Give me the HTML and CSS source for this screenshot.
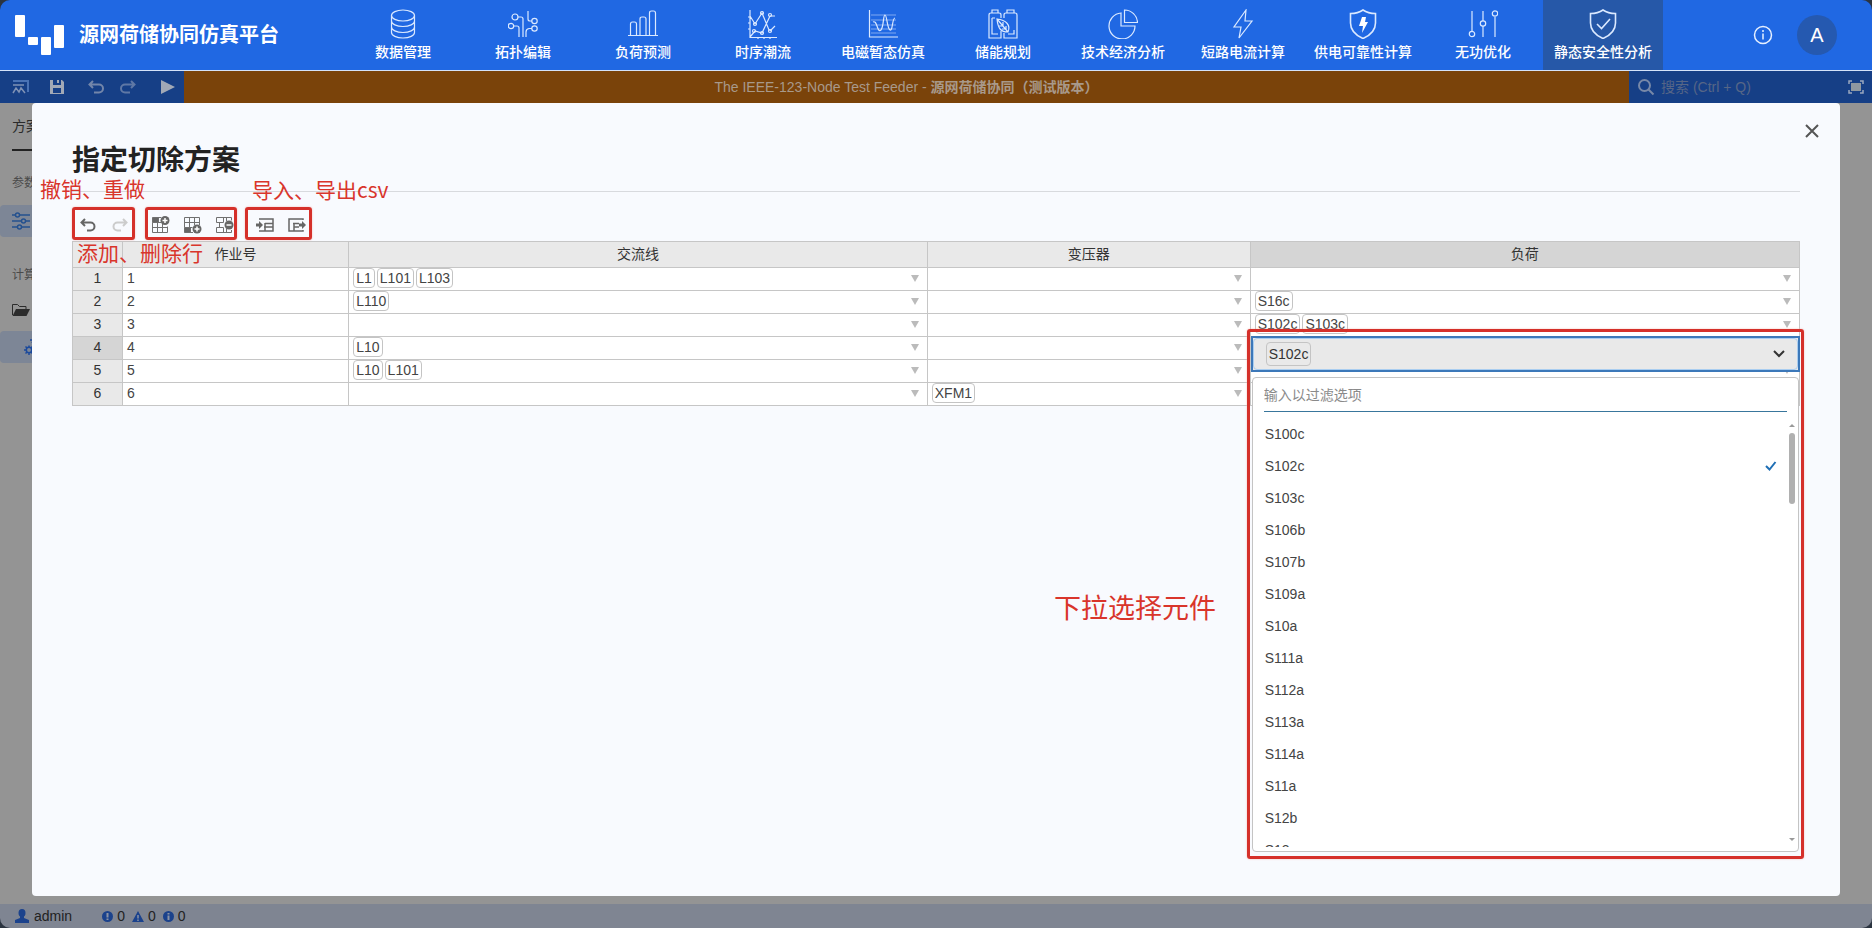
FILE: index.html
```html
<!DOCTYPE html>
<html lang="zh-CN">
<head>
<meta charset="utf-8">
<title>源网荷储协同仿真平台</title>
<link rel="stylesheet" href="styles.css">
</head>
<body>
<div class="app">
  <header class="header">
    <div class="brand">
      <svg class="logo" width="50" height="42" viewBox="0 0 50 42" fill="#fff"><rect x="0" y="1" width="10" height="22" rx="1"/><rect x="13" y="23" width="10" height="8" rx="1"/><rect x="26" y="23" width="10" height="18" rx="1"/><rect x="39" y="11" width="10" height="23" rx="1"/></svg>
      <span class="brand-name">源网荷储协同仿真平台</span>
    </div>
    <nav class="nav">
      <button class="nav-item"><svg class="nav-icon" viewBox="0 0 30 30"><ellipse cx="15" cy="6.500" rx="11.500" ry="5.500"/><path d="M3.500 6.500v17c0 3 5 5.500 11.500 5.500s11.500-2.500 11.500-5.500v-17M3.500 12c0 3 5 5.500 11.500 5.500S26.500 15 26.500 12M3.500 18c0 3 5 5.500 11.500 5.500S26.500 21 26.500 18"/></svg>数据管理</button>
      <button class="nav-item"><svg class="nav-icon" viewBox="0 0 30 30"><circle cx="7" cy="8" r="3"/><circle cx="3" cy="17" r="2.700"/><circle cx="26.500" cy="12" r="2.700"/><circle cx="26.500" cy="19.500" r="2.700"/><path d="M10 8h3q2 0 2 2v18M6 17h3q2 0 2 2v9M20 2v8q0 2 2 2h2M18 28v-5q0-3 3-3.500h3"/></svg>拓扑编辑</button>
      <button class="nav-item"><svg class="nav-icon" viewBox="0 0 30 30"><path d="M0 26.500h30M2.500 26.500V15q0-2 2-2h2q2 0 2 2v11.500M12 26.500V10q0-2 2-2h2q2 0 2 2v16.500M21.500 26.500V4q0-2 2-2h2q2 0 2 2v22.500"/></svg>负荷预测</button>
      <button class="nav-item"><svg class="nav-icon" viewBox="0 0 30 30"><path d="M2 1v27.500h27M2 7l5 8 7-11 7 17h1M2 28l5-6 7 2 8-17h5M22 22l5-5M10 28v2M16 28v2M22 28v2M0 8h2M0 14h2M0 20h2"/><circle cx="7" cy="15" r="1.500"/><circle cx="14" cy="4" r="1.500"/><circle cx="22" cy="6" r="1.500"/><circle cx="6" cy="22" r="1.500"/><circle cx="14" cy="24" r="1.500"/><circle cx="22" cy="22" r="1.500"/></svg>时序潮流</button>
      <button class="nav-item"><svg class="nav-icon" viewBox="0 0 30 30"><path d="M1.500 1v27H30"/><path d="M5 13c2-1 3 1 4 4s2 6 4 4c3-4 2-15 4-15s2 13 5 15c3 1 2-12 5-12" /><path opacity=".5" d="M3 6h25M3 11h25M3 16h25M3 20h25M3 24h25"/></svg>电磁暂态仿真</button>
      <button class="nav-item"><svg class="nav-icon" viewBox="0 0 30 30"><path d="M13 9V6q0-2-2-2H3Q1 4 1 6v23h12v-7M4 4V1h6v3M16 9V6q0-2 2-2h9q2 0 2 2v23H16v-5M19 4V1h7v3"/><path d="M9 10c1 10 4 13 11 13 3-7-2-12-11-13zl11 13M15 13v4h-4M18 17v3h-4M4 9h3M4 9v16h6M26 21v4h-6"/></svg>储能规划</button>
      <button class="nav-item"><svg class="nav-icon" viewBox="0 0 30 30"><path d="M13 4v13h14a13 13 0 1 1-14-13zM16.500 1v12.500H29.500A13 13 0 0 0 16.500 1z"/></svg>技术经济分析</button>
      <button class="nav-item"><svg class="nav-icon" viewBox="0 0 30 30"><path d="M18 1 6 18h7L11 29 24 12h-7z"/></svg>短路电流计算</button>
      <button class="nav-item"><svg class="nav-icon thick" viewBox="0 0 30 30"><path d="M15 1q5 3.500 12.500 3.500V14q0 10-12.500 15.500Q2.500 24 2.500 14V4.500Q10 4.500 15 1z"/><path fill="#fff" stroke="none" d="M14 8h4l-1 5h3l-6 11 1-7h-4z"/></svg>供电可靠性计算</button>
      <button class="nav-item"><svg class="nav-icon" viewBox="0 0 30 30"><path d="M4 2v20M15 2v10M15 17v11M27 8v20"/><circle cx="4" cy="25" r="2.700"/><circle cx="15" cy="14.500" r="2.700"/><circle cx="27" cy="4.500" r="2.700"/></svg>无功优化</button>
      <button class="nav-item active"><svg class="nav-icon thick" viewBox="0 0 30 30"><path d="M15 1q5 3.500 12.500 3.500V14q0 10-12.500 15.500Q2.500 24 2.500 14V4.500Q10 4.500 15 1zM9 15l4.500 4.500L22 10"/></svg>静态安全性分析</button>
    </nav>
    <div class="account">
      <button class="icon-button" aria-label="关于"><svg width="20" height="20" viewBox="0 0 20 20" fill="none" stroke="#e6f0ff" stroke-width="1.500"><circle cx="10" cy="10" r="8.500"/><path d="M10 8.500v6M10 5v2"/></svg></button>
      <button class="avatar">A</button>
    </div>
  </header>

  <div class="toolbar">
    <div class="toolbar-actions">
      <button class="tool" aria-label="图表"><svg width="18" height="16" viewBox="0 0 18 16" fill="none" stroke="#7f92b5"><path stroke="#4a73b5" stroke-width="2" d="M1 2h15v11"/><path d="M1 6h11M1 14l3-5 3 4 2-4 4 5" stroke-width="1.500"/></svg></button>
      <button class="tool" aria-label="保存"><svg width="14" height="14" viewBox="0 0 14 14"><path fill="#a2a9b6" fill-rule="evenodd" d="M0 0h3v5h8V0h1l2 2v12H0zM7 0h2v3H7zM3 8v5h8V8z"/></svg></button>
      <button class="tool" aria-label="撤销"><svg width="16" height="14" viewBox="0 0 16 14" fill="none" stroke="#7386aa" stroke-width="2"><path d="M5 1 1.500 4.500 5 8M2 4.500h9a4 4 0 0 1 0 8H6"/></svg></button>
      <button class="tool" aria-label="重做"><svg width="16" height="14" viewBox="0 0 16 14" fill="none" stroke="#5f78a5" stroke-width="2"><path d="M11 1l3.500 3.500L11 8M14 4.500H5a4 4 0 0 0 0 8h5"/></svg></button>
      <button class="tool" aria-label="运行"><svg width="14" height="16" viewBox="0 0 14 16"><path fill="#a2a9b6" d="M0 1v14l14-7z"/></svg></button>
    </div>
    <div class="project-title">The IEEE-123-Node Test Feeder - <span>源网荷储协同（测试版本）</span></div>
    <div class="search">
      <svg width="18" height="18" viewBox="0 0 18 18" fill="none" stroke="#7788a8" stroke-width="2"><circle cx="7.500" cy="7.500" r="5.500"/><path d="m11.500 11.500 5 5"/></svg>
      <input class="search-input" type="text" placeholder="搜索 (Ctrl + Q)" aria-label="搜索">
      <button class="icon-button" aria-label="全屏"><svg width="16" height="14" viewBox="0 0 16 14"><path fill="none" stroke="#9aa8bf" stroke-width="1.500" d="M1 4V1h3M12 1h3v3M15 10v3h-3M4 13H1v-3"/><path fill="#8f98a0" d="M3 3h10v8H3z"/></svg></button>
    </div>
  </div>

  <main class="workspace">
    <aside class="sidebar">
      <div class="side-tab">方案配置</div>
      <div class="side-label">参数方案</div>
      <button class="side-item selected" aria-label="参数方案"><svg width="18" height="18" viewBox="0 0 18 18" fill="none" stroke="#24518f" stroke-width="1.500"><path d="M0 3h3M8 3h10M0 9h9M14 9h4M0 15h5M10 15h8"/><circle cx="5.500" cy="3" r="2"/><circle cx="11.500" cy="9" r="2"/><circle cx="7.500" cy="15" r="2"/></svg></button>
      <div class="side-label second">计算方案</div>
      <button class="side-item" aria-label="打开方案"><svg width="18" height="14" viewBox="0 0 18 14"><path fill="none" stroke="#2c2c2c" d="M.5 12V1.500h5l2 2H14V6"/><path fill="#2c2c2c" d="M4 6h14l-3.500 7H.5z"/></svg></button>
      <button class="side-item selected child" aria-label="计算方案"><svg width="18" height="16" viewBox="0 0 18 16" fill="none" stroke="#1c4a9c" stroke-width="1.500"><circle cx="5" cy="11" r="2.700"/><path d="M5 6.500v2M5 14v2M0 11h2M8 11h2M1.500 7.500 3 9M7 13l1.500 1.500M8.500 7.500 7 9M3 13l-1.500 1.500M6 1h4L8 4"/></svg></button>
    </aside>

    <section class="modal" role="dialog" aria-labelledby="modal-title">
      <button class="close" aria-label="关闭"><svg width="14" height="14" viewBox="0 0 14 14" fill="none" stroke="#555" stroke-width="2"><path d="m1 1 12 12M13 1 1 13"/></svg></button>
      <h1 class="modal-title" id="modal-title">指定切除方案</h1>
      <div class="grid-tools">
        <div class="tool-group history">
          <button class="grid-tool" aria-label="撤销"><svg width="16" height="14" viewBox="0 0 16 14" fill="none" stroke="#666" stroke-width="2"><path d="M5 1 1.500 4.500 5 8M2 4.500h8.500a4 4 0 0 1 0 8H7"/></svg></button>
          <button class="grid-tool" aria-label="重做"><svg width="16" height="14" viewBox="0 0 16 14" fill="none" stroke="#ccc" stroke-width="2"><path d="M11 1l3.500 3.500L11 8M14 4.500H5.500a4 4 0 0 0 0 8H9"/></svg></button>
          <span class="note note-history">撤销、重做</span>
        </div>
        <div class="tool-group rows">
          <button class="grid-tool" aria-label="在上方添加行"><svg width="18" height="18" viewBox="0 0 18 18" fill="none" stroke="#707070"><path fill="#666" d="M.5 1.500h6v5h-6z"/><path d="M.5 6.500v10h15v-6M.5 11.500h15M5.500 6.500v10M10.500 8v8.500M6 6.500h3M6 1.500h3"/><circle cx="13" cy="4.500" r="4.500" fill="#666" stroke="none"/><path stroke="#fff" stroke-width="1.500" d="M10.500 4.500h5M13 2v5"/></svg></button>
          <button class="grid-tool" aria-label="在下方添加行"><svg width="18" height="18" viewBox="0 0 18 18" fill="none" stroke="#707070"><path d="M.5 11V1.500h15V9M.5 6.500h15M.5 11.500h8M5.500 1.500v10M10.500 1.500V9"/><path fill="#666" d="M.5 11.500h6v5h-6zM6 16.500h3"/><circle cx="13" cy="13" r="4.500" fill="#666" stroke="none"/><path stroke="#fff" stroke-width="1.500" d="M10.500 13h5M13 10.500v5"/></svg></button>
          <button class="grid-tool" aria-label="删除行"><svg width="18" height="18" viewBox="0 0 18 18" fill="none" stroke="#707070"><path d="M.5 1.500h15v3M.5 6.500h7v-5M.5 11.500h7v5M.5 1.500v5M.5 11.500v5h15V14M10.500 1.500V5M10.500 13v3.500M3.500 6.500v5"/><circle cx="13" cy="9" r="4.500" fill="#666" stroke="none"/><path stroke="#fff" stroke-width="1.500" d="M10.500 9h5"/></svg></button>
          <span class="note note-rows">添加、删除行</span>
        </div>
        <div class="tool-group csv">
          <button class="grid-tool" aria-label="导入 csv"><svg width="18" height="14" viewBox="0 0 18 14" fill="none" stroke="#666"><path stroke-width="1.500" d="M3 1h14v12H3M9 5.500h8M8 9h9M9 5v8"/><path fill="#666" stroke="none" d="M0 5.500h3V3l4 4-4 4V8.500H0z"/></svg></button>
          <button class="grid-tool" aria-label="导出 csv"><svg width="18" height="14" viewBox="0 0 18 14" fill="none" stroke="#666"><path stroke-width="1.500" d="M15 2V1H1v12h14v-1M5 5.500h6M6 9h5M6 5v8"/><path fill="#666" stroke="none" d="M11 5.500h3V3l4 4-4 4V8.500h-3z"/></svg></button>
          <span class="note note-csv">导入、导出csv</span>
        </div>
      </div>

      <table class="grid">
        <colgroup><col class="col-index"><col class="col-job"><col class="col-line"><col class="col-transformer"><col></colgroup>
        <thead>
          <tr><th></th><th>作业号</th><th>交流线</th><th>变压器</th><th class="current">负荷</th></tr>
        </thead>
        <tbody>
          <tr><th>1</th><td>1</td>
            <td><div class="cell"><span class="tag">L1</span><span class="tag">L101</span><span class="tag">L103</span><button class="arrow" aria-label="选择交流线"></button></div></td>
            <td><div class="cell"><button class="arrow" aria-label="选择变压器"></button></div></td>
            <td><div class="cell"><button class="arrow" aria-label="选择负荷"></button></div></td></tr>
          <tr><th>2</th><td>2</td>
            <td><div class="cell"><span class="tag">L110</span><button class="arrow" aria-label="选择交流线"></button></div></td>
            <td><div class="cell"><button class="arrow" aria-label="选择变压器"></button></div></td>
            <td><div class="cell"><span class="tag">S16c</span><button class="arrow" aria-label="选择负荷"></button></div></td></tr>
          <tr><th>3</th><td>3</td>
            <td><div class="cell"><button class="arrow" aria-label="选择交流线"></button></div></td>
            <td><div class="cell"><button class="arrow" aria-label="选择变压器"></button></div></td>
            <td><div class="cell"><span class="tag">S102c</span><span class="tag">S103c</span><button class="arrow" aria-label="选择负荷"></button></div></td></tr>
          <tr><th class="current">4</th><td>4</td>
            <td><div class="cell"><span class="tag">L10</span><button class="arrow" aria-label="选择交流线"></button></div></td>
            <td><div class="cell"><button class="arrow" aria-label="选择变压器"></button></div></td>
            <td class="editing">
              <div class="picker">
                <button class="picker-value" aria-haspopup="listbox" aria-expanded="true"><span class="picker-inner"><span class="tag large">S102c</span><svg width="12" height="8" viewBox="0 0 12 8" fill="none" stroke="#333" stroke-width="2"><path d="m1 1 5 5 5-5"/></svg></span></button>
                <div class="picker-panel">
                  <input class="filter" type="text" placeholder="输入以过滤选项" aria-label="输入以过滤选项">
                  <div class="list-wrap">
                    <ul class="options" role="listbox" aria-label="负荷">
                      <li role="option">S100c</li>
                      <li role="option" aria-selected="true">S102c<svg width="12" height="10" viewBox="0 0 12 10" fill="none" stroke="#1f6fb5" stroke-width="2"><path d="m1 5 3.500 3.500L10.500 1"/></svg></li>
                      <li role="option">S103c</li>
                      <li role="option">S106b</li>
                      <li role="option">S107b</li>
                      <li role="option">S109a</li>
                      <li role="option">S10a</li>
                      <li role="option">S111a</li>
                      <li role="option">S112a</li>
                      <li role="option">S113a</li>
                      <li role="option">S114a</li>
                      <li role="option">S11a</li>
                      <li role="option">S12b</li>
                      <li role="option">S13c</li>
                    </ul>
                    <div class="scrollbar"><span class="scroll-up"></span><span class="scroll-thumb"></span><span class="scroll-down"></span></div>
                  </div>
                </div>
                <span class="note note-picker">下拉选择元件</span>
              </div>
            </td></tr>
          <tr><th>5</th><td>5</td>
            <td><div class="cell"><span class="tag">L10</span><span class="tag">L101</span><button class="arrow" aria-label="选择交流线"></button></div></td>
            <td><div class="cell"><button class="arrow" aria-label="选择变压器"></button></div></td>
            <td><div class="cell"><button class="arrow" aria-label="选择负荷"></button></div></td></tr>
          <tr><th>6</th><td>6</td>
            <td><div class="cell"><button class="arrow" aria-label="选择交流线"></button></div></td>
            <td><div class="cell"><span class="tag">XFM1</span><button class="arrow" aria-label="选择变压器"></button></div></td>
            <td><div class="cell"><button class="arrow" aria-label="选择负荷"></button></div></td></tr>
        </tbody>
      </table>
    </section>
  </main>

  <footer class="status">
    <span class="status-item user"><svg width="14" height="14" viewBox="0 0 14 14" fill="#1b428c"><ellipse cx="7" cy="4" rx="3.500" ry="4"/><path d="M5 7h4v2l5 2v3H0v-3l5-2z"/></svg>admin</span>
    <span class="status-item"><svg width="11" height="11" viewBox="0 0 11 11"><circle cx="5.500" cy="5.500" r="5.500" fill="#1b428c"/><path stroke="#8b93a5" stroke-width="2" d="M5.500 2v4.500M5.500 7.500v1.500"/></svg>0</span>
    <span class="status-item"><svg width="12" height="11" viewBox="0 0 12 11"><path fill="#1b428c" d="M6 0l6 11H0z"/><path stroke="#8b93a5" stroke-width="1.500" d="M6 4v3.500M6 8.500V10"/></svg>0</span>
    <span class="status-item"><svg width="11" height="11" viewBox="0 0 11 11"><circle cx="5.500" cy="5.500" r="5.500" fill="#1b428c"/><path stroke="#8b93a5" stroke-width="2" d="M5.500 2v1.500M5.500 4.500V9"/></svg>0</span>
  </footer>
</div>
</body>
</html>
```
FILE: styles.css
```css
* { box-sizing: border-box; }

body {
  margin: 0;
  background: #2b3440;
  font: 14px/20px "Liberation Sans", "Noto Sans CJK SC", sans-serif;
  color: #333;
}

button, input { font: inherit; color: inherit; }
button { padding: 0; border: 0; background: none; cursor: pointer; }
svg { display: block; flex: none; }

.app {
  display: flex;
  flex-direction: column;
  min-height: 100vh;
  border-radius: 10px;
  overflow: hidden;
}

/* Header */
.header {
  display: flex;
  height: 71px;
  background: #2068e3;
  border-bottom: 1px solid #d5e3fa;
  color: #fff;
}
.brand { display: flex; align-items: center; flex: 0 0 343px; padding-left: 15px; gap: 14px; }
.brand-name { font-size: 20px; font-weight: 600; }
.nav { display: flex; }
.nav-item {
  display: flex;
  flex-direction: column;
  align-items: center;
  gap: 3px;
  width: 120px;
  padding-top: 9px;
  font-weight: 500;
  white-space: nowrap;
}
.nav-item.active { background: #2658a8; }
.nav-icon { width: 30px; height: 30px; fill: none; stroke: #dbe9ff; stroke-width: 1.2; }
.nav-icon.thick { stroke-width: 1.6; }
.account { display: flex; align-items: center; gap: 24px; margin-left: auto; padding-right: 35px; }
.avatar { width: 40px; height: 40px; border-radius: 50%; background: #2559b0; font-size: 20px; font-weight: 500; }

/* Toolbar */
.toolbar { display: flex; height: 32px; background: #163f86; }
.toolbar-actions { display: flex; align-items: center; gap: 20px; flex: 0 0 184px; padding-left: 12px; }
.tool:nth-child(3) { margin-left: 4px; }
.tool:nth-child(4) { margin-left: -4px; }
.tool:nth-child(5) { margin-left: 5px; }
.project-title {
  flex: 1;
  background: #7a430a;
  color: #a8998a;
  line-height: 32px;
  text-align: center;
}
.project-title span { font-weight: 600; }
.search { display: flex; align-items: center; flex: 0 0 240px; gap: 6px; padding: 0 8px; background: #163f86; }
.search-input { flex: 1; min-width: 0; padding: 0; border: 0; outline: 0; background: none; }
.search-input::placeholder { color: #566687; opacity: 1; }

/* Workspace behind the dialog */
.workspace { position: relative; flex: 1; background: #949494; }
.sidebar { width: 184px; color: #4a4a4a; overflow: hidden; }
.side-tab { margin-left: 12px; padding: 13px 0; border-bottom: 2px solid #222; color: #2b2b2b; }
.side-label { padding: 22px 12px 12px; font-size: 12px; }
.side-label.second { padding: 28px 12px 9px; }
.side-item { display: flex; align-items: center; width: 100%; height: 32px; padding-left: 12px; border-radius: 4px; }
.side-item.selected { background: #7d8696; }
.side-item.child { margin-top: 5px; padding-left: 24px; }

/* Dialog */
.modal {
  position: absolute;
  inset: 0 32px 8px;
  padding: 37px 40px 0;
  border-radius: 4px;
  background: #f8fafe;
}
.close { position: absolute; top: 21px; right: 21px; }
.modal-title {
  margin: 0 0 15px;
  padding-bottom: 9px;
  border-bottom: 1px solid #d8dade;
  font-size: 28px;
  line-height: 42px;
  color: #222;
}

.grid-tools { display: flex; gap: 8px; margin-bottom: 1px; }
.tool-group { position: relative; display: flex; height: 33px; padding-top: 3px; }
.grid-tool { display: flex; align-items: center; justify-content: center; width: 32px; height: 30px; }
.tool-group::after, .picker::after {
  content: "";
  position: absolute;
  inset: 0 1px 0 0;
  border: 3px solid #d5302a;
  border-radius: 3px;
  box-shadow: 0 0 2px #f4b5b0;
  pointer-events: none;
}
.tool-group.rows { padding-left: 1px; }
.tool-group.rows::after { inset: 0 4px 0 1px; }
.tool-group.csv::after { inset: 0 1px 0 -4px; }

.note { position: absolute; z-index: 2; color: #d9352b; font-size: 21px; line-height: 28px; white-space: nowrap; font-family: "Noto Sans CJK SC", sans-serif; }
.note-history { left: -32px; bottom: 38px; }
.note-rows { left: -67px; top: 31px; }
.note-csv { left: 3px; bottom: 37px; }
.note-picker { right: 584px; top: 253px; font-size: 27px; line-height: 36px; }

/* Data grid */
.grid { width: 100%; table-layout: fixed; border-collapse: collapse; background: #fff; }
.col-index { width: 50px; }
.col-job { width: 13.1%; }
.col-line { width: 33.5%; }
.col-transformer { width: 18.7%; }
.grid th, .grid td { height: 23px; padding: 0 0 2px; border: 1px solid #c6c6c6; font-weight: 400; }
.grid th { background: #e9e9e9; text-align: center; }
.grid thead th { height: 26px; }
.grid th.current { background: #d5d5d5; }
.grid td { padding-left: 4px; color: #444; }
.cell { display: flex; gap: 2px; align-items: center; padding-right: 8px; min-height: 20px; }
.tag { padding: 0 2px; border: 1px solid #c4c4c4; border-radius: 4px; line-height: 18px; }
.tag.large { line-height: 22px; color: #333; }
.arrow {
  margin-left: auto;
  border: 4px solid transparent;
  border-top: 7px solid #bbb;
  border-bottom: 0;
}

/* Drop-down editor */
.grid td.editing { position: relative; padding: 0; }
.picker { position: absolute; z-index: 1; top: -1px; left: 0; right: -1px; }
.picker::after { inset: -7px -4px; }
.picker-value { display: block; width: 100%; height: 36px; border: 2px solid #3c78b9; background: #e9e9e9; }
.picker-inner {
  display: flex;
  align-items: center;
  justify-content: space-between;
  height: 32px;
  padding: 0 12px;
  border: 1px solid #a9cdf0;
  border-radius: 4px;
}
.picker-panel {
  margin: 5px 1px 0;
  padding-bottom: 4px;
  border: 1px solid #c4c4c4;
  border-radius: 4px;
  background: #fff;
}
.filter {
  display: block;
  width: calc(100% - 22px);
  height: 34px;
  margin: 0 11px 6px;
  padding: 0;
  border: 0;
  border-bottom: 1px solid #39769c;
  outline: 0;
  background: none;
}
.filter::placeholder { color: #8a8a8a; opacity: 1; }
.list-wrap { display: flex; height: 429px; padding-right: 3px; }
.options { flex: 1; margin: 0; padding: 0; list-style: none; overflow: hidden; }
.options li { display: flex; align-items: center; justify-content: space-between; height: 32px; padding: 0 12px; }
.scrollbar { display: flex; flex-direction: column; align-items: center; width: 6px; padding: 6px 0; }
.scroll-up { border: 3px solid transparent; border-top: 0; border-bottom: 3px solid #999; }
.scroll-thumb { width: 6px; height: 71px; margin-top: 6px; border-radius: 3px; background: #b0b0b0; }
.scroll-down { margin-top: auto; border: 3px solid transparent; border-bottom: 0; border-top: 3px solid #999; }

/* Status bar */
.status { display: flex; align-items: center; height: 24px; padding-left: 15px; gap: 7px; background: #7f8592; color: #222; }
.status-item { display: flex; align-items: center; gap: 4px; }
.status-item.user { margin-right: 23px; gap: 5px; }
```
